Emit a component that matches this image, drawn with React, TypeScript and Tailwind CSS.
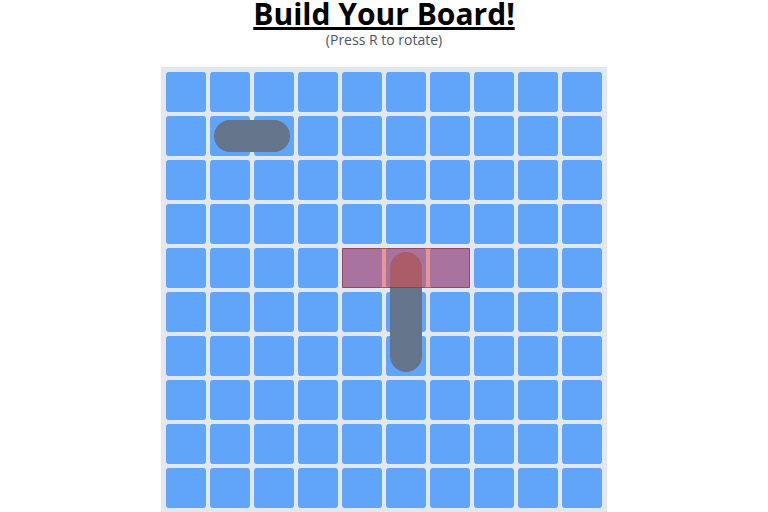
const cells = Array.from({ length: 100 }, (_, i) => i);

const App = () => {
  return (
    <div className="w-full min-h-screen bg-white flex flex-col items-center font-['Open_Sans',sans-serif]">
      <h1 className="text-3xl font-bold underline text-black leading-[28px]">
        Build Your Board!
      </h1>
      <p className="text-sm text-[#4b5563] leading-[22px] mt-px">(Press R to rotate)</p>
      <div className="relative mt-[16px] bg-[#e2e8f0] p-[5px] grid grid-cols-10 gap-1">
        {cells.map((c) => (
          <div key={c} className="w-10 h-10 bg-[#60a5fa] rounded-[3px]" />
        ))}
        <div className="absolute left-[53px] top-[53px] w-[76px] h-8 rounded-full bg-[#64748b]" />
        <div className="absolute left-[229px] top-[185px] w-8 h-[120px] rounded-full bg-[#64748b]" />
        <div className="absolute left-[181px] top-[181px] w-[128px] h-10 bg-[#ef4444]/50 border border-[#7f1d1d]/50" />
      </div>
    </div>
  );
};

export default App;
